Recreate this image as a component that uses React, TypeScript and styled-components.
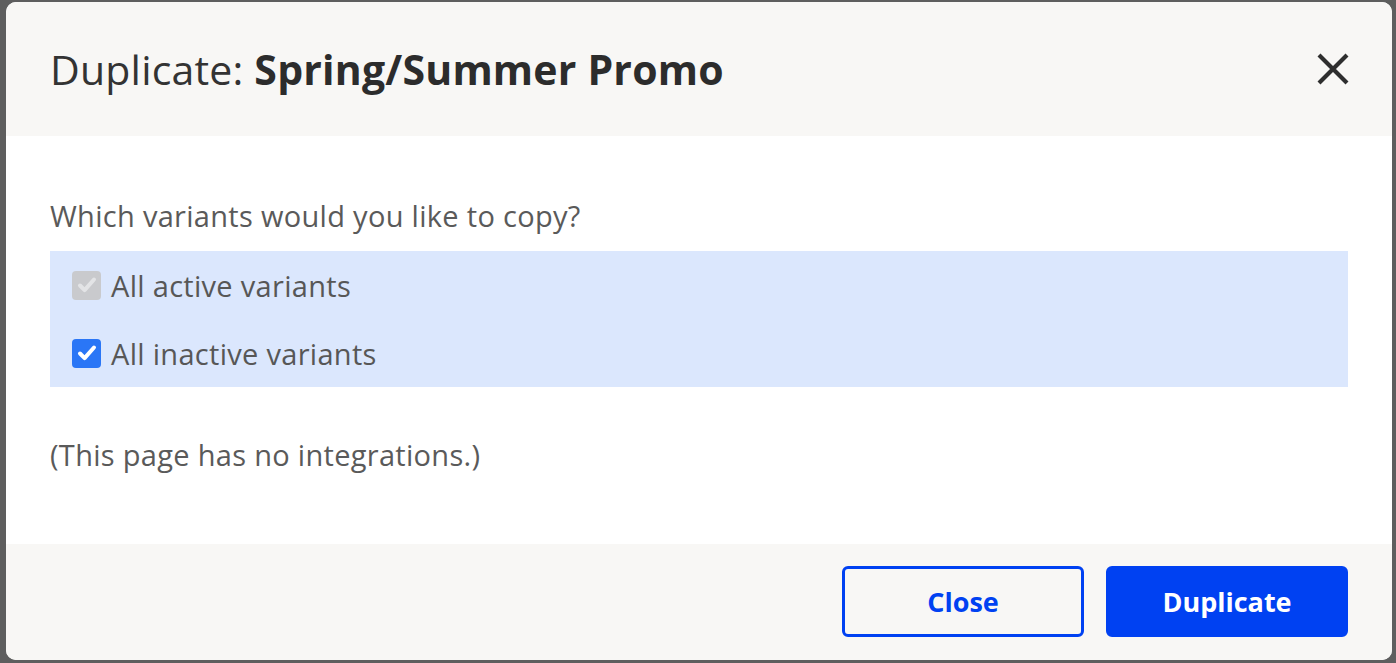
import React, { useState } from 'react';
import styled, { createGlobalStyle } from 'styled-components';

const GlobalStyle = createGlobalStyle`
  html, body {
    margin: 0;
    padding: 0;
    background: #5e5e5e;
  }
  body {
    font-family: "Open Sans", Lato, "Liberation Sans", sans-serif;
  }
  * {
    box-sizing: border-box;
  }
`;

const Backdrop = styled.div`
  width: 1396px;
  height: 663px;
  padding: 2px 4px 3px 6px;
  background: #5e5e5e;
  overflow: hidden;
`;

const Modal = styled.div`
  width: 1386px;
  height: 658px;
  background: #ffffff;
  border-radius: 10px;
  display: flex;
  flex-direction: column;
  overflow: hidden;
`;

const Header = styled.header`
  height: 134px;
  flex-shrink: 0;
  background: #f8f7f5;
  padding: 0 44px;
  display: flex;
  align-items: center;
  justify-content: space-between;
`;

const Title = styled.h1`
  margin: 0;
  font-size: 41px;
  font-weight: 400;
  color: #333333;
  letter-spacing: 0.2px;

  strong {
    font-weight: 700;
    color: #2c2c2c;
  }
`;

const CloseIcon = styled.button`
  width: 32px;
  height: 32px;
  padding: 0;
  border: none;
  background: transparent;
  cursor: pointer;
  display: flex;
  align-items: center;
  justify-content: center;
  margin-right: -1px;
`;

const Body = styled.div`
  flex: 1;
  padding: 60px 44px 0;
  display: flex;
  flex-direction: column;
`;

const Text = styled.p<{ $gap?: number }>`
  margin: ${p => p.$gap ?? 0}px 0 0;
  font-size: 29px;
  line-height: 40px;
  color: #5a5a5a;
  letter-spacing: 0.3px;
`;

const Options = styled.div`
  margin-top: 15px;
  background: #dbe7fd;
  padding: 0 22px;
  display: flex;
  flex-direction: column;
`;

const Option = styled.label<{ $disabled?: boolean }>`
  height: 68px;
  display: flex;
  align-items: center;
  gap: 10px;
  font-size: 29px;
  letter-spacing: 0.3px;
  color: #575757;
  cursor: ${p => (p.$disabled ? 'default' : 'pointer')};
`;

const Box = styled.span<{ $checked: boolean; $disabled?: boolean }>`
  width: 29px;
  height: 29px;
  border-radius: 4px;
  flex-shrink: 0;
  display: flex;
  align-items: center;
  justify-content: center;
  background: ${p => (p.$disabled ? '#c9cacd' : p.$checked ? '#2a76f6' : '#ffffff')};
  border: ${p => (p.$checked || p.$disabled ? 'none' : '2px solid #767676')};
`;

const Footer = styled.footer`
  height: 116px;
  flex-shrink: 0;
  background: #f8f7f5;
  padding: 22px 44px 23px;
  display: flex;
  justify-content: flex-end;
  gap: 22px;
`;

const Button = styled.button<{ $primary?: boolean }>`
  width: 242px;
  height: 71px;
  border-radius: 6px;
  font-family: "Open Sans", Lato, "Liberation Sans", sans-serif;
  font-size: 27px;
  font-weight: 700;
  cursor: pointer;
  border: 3px solid #0041f2;
  background: ${p => (p.$primary ? '#0041f2' : 'transparent')};
  color: ${p => (p.$primary ? '#ffffff' : '#0041f2')};
`;

const Check: React.FC<{ color: string }> = ({ color }) => (
  <svg width="22" height="22" viewBox="0 0 22 22" fill="none">
    <path d="M4 11.5l4.6 4.6L18 5.5" stroke={color} strokeWidth="4" strokeLinecap="round" strokeLinejoin="round" />
  </svg>
);

const App: React.FC = () => {
  const [inactive, setInactive] = useState(true);

  return (
    <Backdrop>
      <GlobalStyle />
      <Modal>
        <Header>
          <Title>
            Duplicate: <strong>Spring/Summer Promo</strong>
          </Title>
          <CloseIcon aria-label="Close">
            <svg width="32" height="32" viewBox="0 0 32 32">
              <path d="M2 2L30 30M30 2L2 30" stroke="#2e2e2e" strokeWidth="4.2" strokeLinecap="butt" />
            </svg>
          </CloseIcon>
        </Header>
        <Body>
          <Text>Which variants would you like to copy?</Text>
          <Options>
            <Option $disabled>
              <Box $checked $disabled>
                <Check color="#e3e4e6" />
              </Box>
              All active variants
            </Option>
            <Option onClick={() => setInactive(v => !v)}>
              <Box $checked={inactive}>{inactive && <Check color="#ffffff" />}</Box>
              All inactive variants
            </Option>
          </Options>
          <Text $gap={48}>(This page has no integrations.)</Text>
        </Body>
        <Footer>
          <Button>Close</Button>
          <Button $primary>Duplicate</Button>
        </Footer>
      </Modal>
    </Backdrop>
  );
};

export default App;
